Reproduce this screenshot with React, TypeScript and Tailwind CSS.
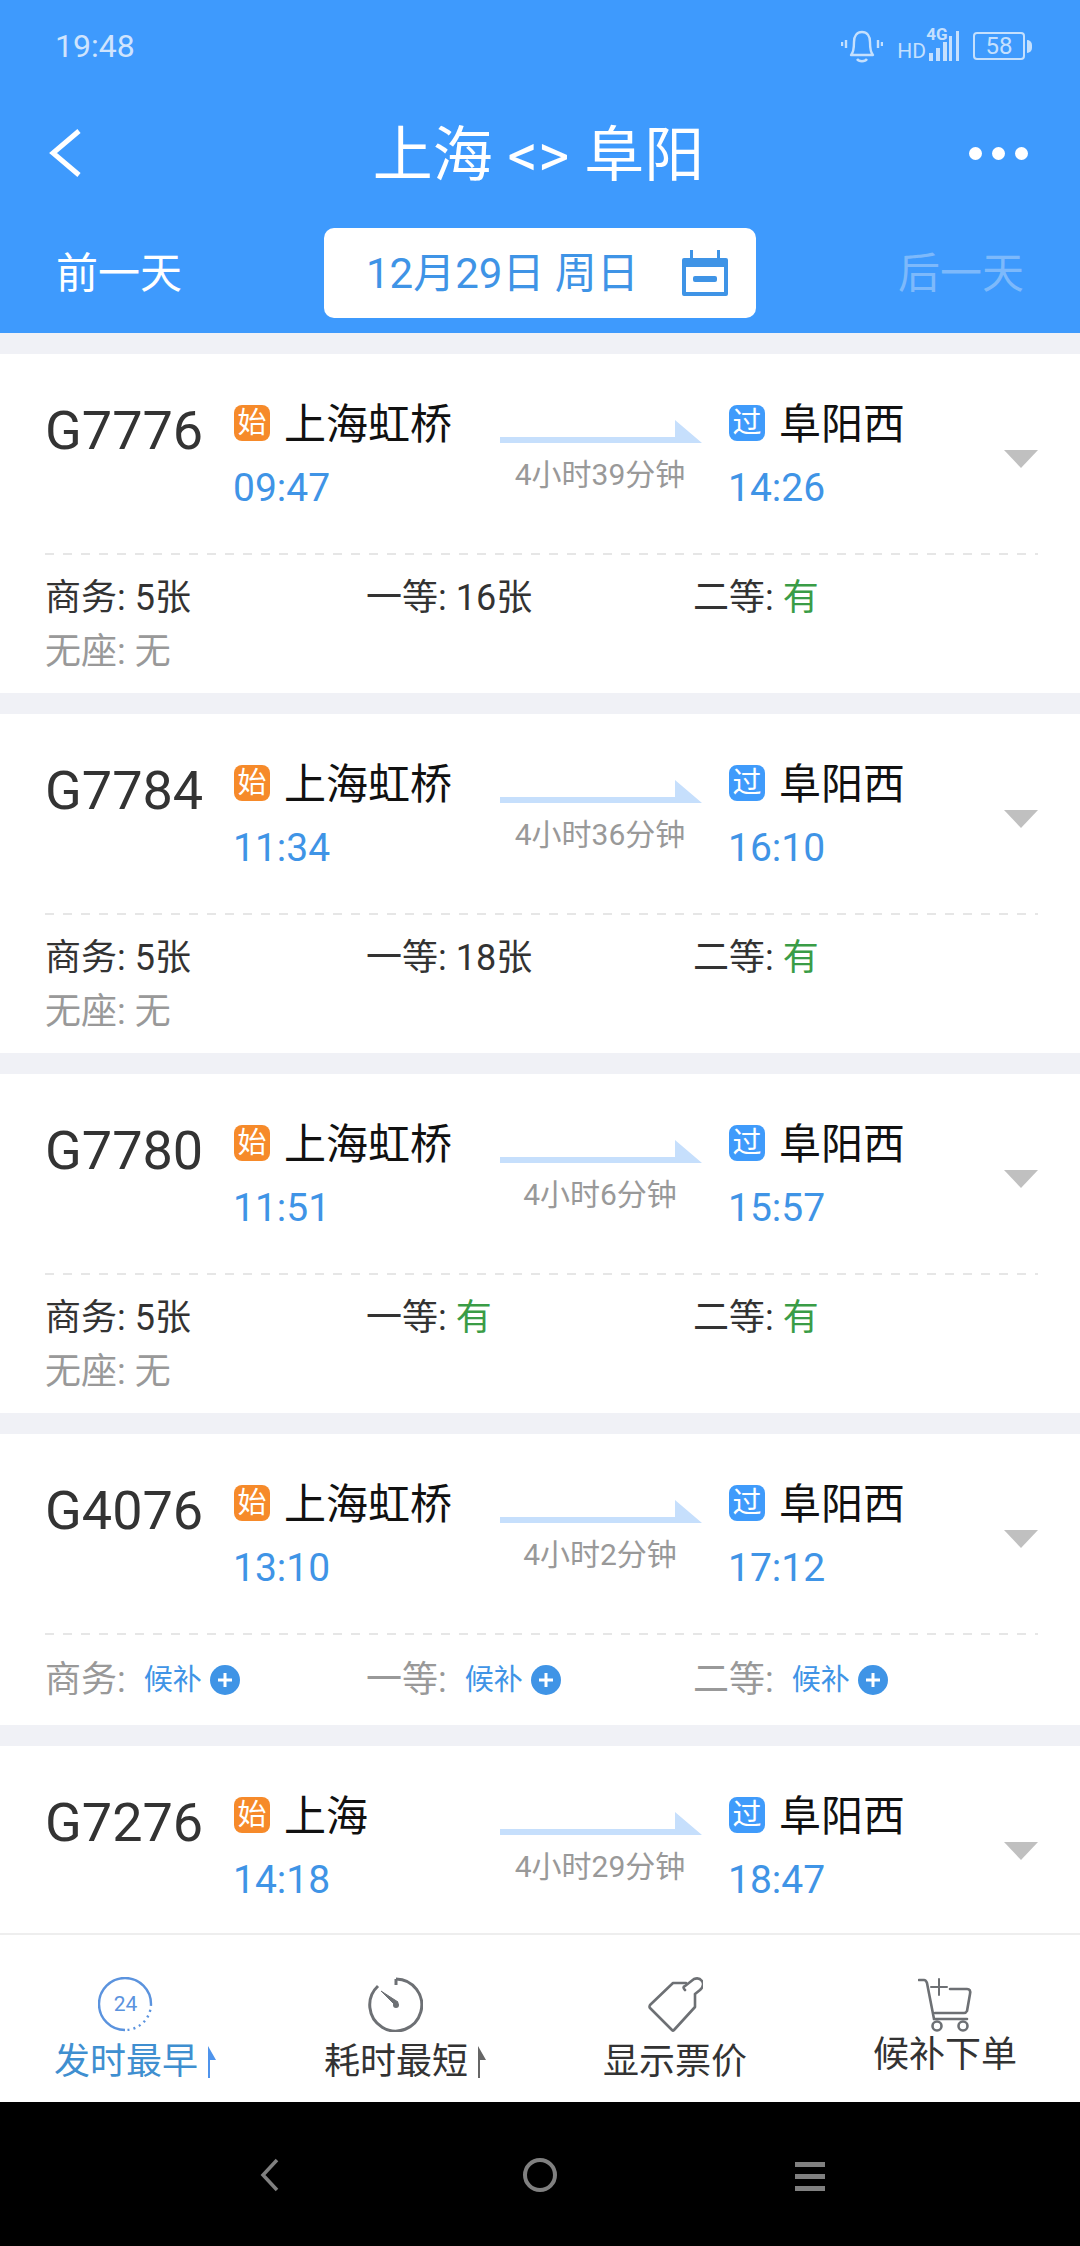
const trains = [
  { no: "G7776", from: "上海虹桥", dep: "09:47", dur: "4小时39分钟", arr: "14:26", seats: [["商务", "5张"], ["一等", "16张"], ["二等", "有"]], extra: true },
  { no: "G7784", from: "上海虹桥", dep: "11:34", dur: "4小时36分钟", arr: "16:10", seats: [["商务", "5张"], ["一等", "18张"], ["二等", "有"]], extra: true },
  { no: "G7780", from: "上海虹桥", dep: "11:51", dur: "4小时6分钟", arr: "15:57", seats: [["商务", "5张"], ["一等", "有"], ["二等", "有"]], extra: true },
  { no: "G4076", from: "上海虹桥", dep: "13:10", dur: "4小时2分钟", arr: "17:12", seats: [["商务", "候补"], ["一等", "候补"], ["二等", "候补"]], extra: false },
  { no: "G7276", from: "上海", dep: "14:18", dur: "4小时29分钟", arr: "18:47", seats: [], extra: false },
];

function Badge({ text, orange }: { text: string; orange?: boolean }) {
  return (
    <span className={`flex h-[36px] w-[36px] shrink-0 items-center justify-center rounded-[8px] text-[29px] leading-none text-white ${orange ? "bg-[#f68a2a]" : "bg-[#3f9bfb]"}`}>
      {text}
    </span>
  );
}

function Seat({ label, value }: { label: string; value: string }) {
  if (value === "候补") {
    return (
      <div className="flex items-center pt-[2px] text-[36px] text-[#999999]">
        <span>{label}:</span>
        <span className="ml-[18px] text-[29px] text-[#3f94e6]">候补</span>
        <svg className="ml-[8px]" width="30" height="30" viewBox="0 0 30 30">
          <circle cx="15" cy="15" r="15" fill="#3f94e6" />
          <path d="M15 8v14M8 15h14" stroke="#fff" strokeWidth="3" />
        </svg>
      </div>
    );
  }
  return (
    <div className="text-[36px] text-[#333333]">
      {label}: <span className={value === "有" ? "text-[#3a9c46]" : ""}>{value}</span>
    </div>
  );
}

function Card({ t }: { t: (typeof trains)[number] }) {
  return (
    <div className="shrink-0 bg-white">
      <div className="flex h-[199px] pl-[45px]">
        <div className="w-[189px] pt-[47px] text-[54px] leading-[60px] text-[#333333]">{t.no}</div>
        <div className="w-[266px] pt-[44px]">
          <div className="flex h-[50px] items-center gap-[14px] text-[42px] leading-[50px] text-[#111111]">
            <Badge text="始" orange />
            <span className="pt-[3px]">{t.from}</span>
          </div>
          <div className="-ml-px mt-[20px] h-[40px] text-[39px] leading-[40px] text-[#3f94e6]">{t.dep}</div>
        </div>
        <div className="flex w-[229px] flex-col pt-[66px]">
          <svg width="202" height="23" viewBox="0 0 202 23">
            <path d="M0 17h175V0l27 23H0z" fill="#c6dffc" />
          </svg>
          <div className="mt-[15px] w-[200px] text-center text-[30px] leading-[34px] text-[#999999]">{t.dur}</div>
        </div>
        <div className="w-[275px] pt-[44px]">
          <div className="flex h-[50px] items-center gap-[14px] text-[42px] leading-[50px] text-[#111111]">
            <Badge text="过" />
            <span className="pt-[3px]">阜阳西</span>
          </div>
          <div className="-ml-px mt-[20px] h-[40px] text-[39px] leading-[40px] text-[#3f94e6]">{t.arr}</div>
        </div>
        <div className="pt-[96px]">
          <svg width="34" height="18" viewBox="0 0 34 18">
            <path d="M0 0h34L17 18z" fill="#c0c0c0" />
          </svg>
        </div>
      </div>
      {t.seats.length > 0 && (
        <div className="pl-[45px] pr-[42px]">
          <div className="h-[2px] bg-[repeating-linear-gradient(90deg,#e6e6e6_0_9px,transparent_9px_18px)]" />
          <div className="grid grid-cols-[321px_327px_1fr] pt-[16px] leading-[54px]">
            {t.seats.map(([l, v]) => (
              <Seat key={l} label={l} value={v} />
            ))}
          </div>
          {t.extra ? (
            <div className="pb-[14px] text-[36px] leading-[54px] text-[#999999]">无座: 无</div>
          ) : (
            <div className="h-[18px]" />
          )}
        </div>
      )}
    </div>
  );
}

function SortArrow({ color }: { color: string }) {
  return (
    <svg width="8" height="32" viewBox="0 0 8 32" fill={color}>
      <path d="M0 0l8 14H2v18H0z" />
    </svg>
  );
}

function Tab({ icon, label, color, arrow, up }: { icon: React.ReactNode; label: string; color: string; arrow?: string; up?: boolean }) {
  return (
    <div className="flex flex-col items-center">
      <div className={`h-[55px] ${arrow ? "pr-[19px]" : ""}`}>{icon}</div>
      <div className={`flex items-center gap-[10px] text-[36px] leading-[48px] ${up ? "-mt-[1px]" : "mt-[6px]"}`} style={{ color }}>
        {label}
        {arrow && <SortArrow color={arrow} />}
      </div>
    </div>
  );
}

export default function App() {
  return (
    <div className="flex h-[2246px] w-[1080px] flex-col overflow-hidden bg-black font-['Roboto','Noto_Sans_CJK_SC',sans-serif]">
      <header className="h-[333px] shrink-0 bg-[#3e9afd]">
        <div className="flex h-[92px] items-center justify-between pl-[55px] pr-[48px]">
          <span className="text-[32px] text-[#cfe4fd]">19:48</span>
          <div className="flex items-center text-[#c5e0fd]">
            <svg width="42" height="36" viewBox="0 0 42 36" fill="none" stroke="#c5e0fd" strokeWidth="2.4">
              <path d="M10 27c3-3 3-8 3-13 0-6 3-10 8-10s8 4 8 10c0 5 0 10 3 13z" strokeLinejoin="round" />
              <path d="M16 31c2 3 8 3 10 0" />
              <path d="M5 12v8M1 14v4M37 12v8M41 14v4" />
            </svg>
            <div className="relative ml-[14px] flex items-end">
              <span className="text-[21px] leading-[20px]">HD</span>
              <span className="absolute -top-[4px] left-[29px] text-[17px] font-bold leading-[14px]">4G</span>
              <svg className="ml-[3px]" width="30" height="30" viewBox="0 0 30 30" fill="#c5e0fd">
                <rect x="0" y="22" width="4" height="8" />
                <rect x="7" y="17" width="4" height="13" />
                <rect x="14" y="11" width="4" height="19" />
                <rect x="20" y="5" width="3" height="25" />
                <rect x="27" y="0" width="3" height="30" />
              </svg>
            </div>
            <div className="ml-[14px] flex h-[28px] w-[52px] items-center justify-center rounded-[4px] border-2 border-[#c5e0fd] text-[24px] leading-none">58</div>
            <div className="ml-[2px] h-[13px] w-[5px] rounded-r-[5px] bg-[#c5e0fd]" />
          </div>
        </div>
        <div className="flex h-[122px] items-center justify-between pl-[48px] pr-[52px]">
          <svg width="34" height="48" viewBox="0 0 34 48" fill="none" stroke="#fff" strokeWidth="5">
            <path d="M31 2L5 24l26 22" />
          </svg>
          <div className="pl-[26px] pt-[5px] text-[60px] leading-none text-white">上海 &lt;&gt; 阜阳</div>
          <div className="flex gap-[10px]">
            <span className="h-[13px] w-[13px] rounded-full bg-white" />
            <span className="h-[13px] w-[13px] rounded-full bg-white" />
            <span className="h-[13px] w-[13px] rounded-full bg-white" />
          </div>
        </div>
        <div className="flex h-[119px] items-start justify-between px-[56px] pt-[14px] text-[42px] text-white">
          <span className="pt-[14px]">前一天</span>
          <div className="flex h-[90px] w-[432px] items-center rounded-[10px] bg-white pl-[42px] pr-[28px] text-[42px] text-[#3f94e6]">
            <span>12月29日 周日</span>
            <svg className="ml-auto" width="46" height="46" viewBox="0 0 46 46" fill="#3f94e6">
              <path fillRule="evenodd" d="M2 8h6V0h3v8h24V0h3v8h6a2 2 0 012 2v34a2 2 0 01-2 2H2a2 2 0 01-2-2V10a2 2 0 012-2zm2 9v25h38V17z" />
              <rect x="11" y="26" width="24" height="6" rx="2" />
            </svg>
          </div>
          <span className="pt-[14px] text-[#7db9fb]">后一天</span>
        </div>
      </header>
      <main className="flex min-h-0 flex-1 flex-col gap-[21px] overflow-hidden border-b-2 border-[#eeeeee] bg-[#f0f1f6] pt-[21px]">
        {trains.map((t) => (
          <Card key={t.no} t={t} />
        ))}
      </main>
      <nav className="grid h-[167px] shrink-0 grid-cols-4 bg-white pt-[42px]">
        <Tab
          color="#3f8fd0"
          arrow="#4f94ec"
          label="发时最早"
          icon={
            <svg width="55" height="55" viewBox="0 0 55 55" fill="none" stroke="#5b93de" strokeWidth="2.4">
              <path d="M53 27A26 26 0 1027 53" />
              <path d="M53 27A26 26 0 0127 53" strokeDasharray="2 4" />
              <text x="27.5" y="34" textAnchor="middle" fontSize="21" fill="#5b93de" stroke="none">24</text>
            </svg>
          }
        />
        <Tab
          color="#333333"
          arrow="#666666"
          label="耗时最短"
          icon={
            <svg width="55" height="55" viewBox="0 0 55 55" fill="none" stroke="#6d7074" strokeWidth="3">
              <path d="M28 2a26 26 0 11-18 7" />
              <path d="M28 2v6" />
              <path d="M13 14l15 15 2-4z" fill="#6d7074" strokeWidth="1" />
              <circle cx="28" cy="28" r="3" fill="#6d7074" stroke="none" />
            </svg>
          }
        />
        <Tab
          color="#333333"
          label="显示票价"
          icon={
            <svg width="55" height="55" viewBox="0 0 55 55" fill="none" stroke="#6d7074" strokeWidth="2.6" strokeLinejoin="round" strokeLinecap="round">
              <path d="M38 6H25L2 28q-1 2 0 3l22 22q1 1 2 0l21-23V18" />
              <path d="M37 13q-3-3 0-4l9-7q5-2 8 2t-2 9l-5 4" />
            </svg>
          }
        />
        <Tab
          color="#333333"
          up
          label="候补下单"
          icon={
            <svg width="55" height="55" viewBox="0 0 55 55" fill="none" stroke="#6d7074" strokeWidth="2.6" strokeLinecap="round">
              <path d="M1 3h5q2 0 3 3l7 36h33" />
              <path d="M32 12h17q4 0 3 5l-3 17q-1 2-3 2H17" />
              <path d="M21 2v16M13 10h16" strokeWidth="2" />
              <circle cx="19" cy="49" r="4.5" />
              <circle cx="45" cy="49" r="4.5" />
            </svg>
          }
        />
      </nav>
      <footer className="relative flex h-[144px] shrink-0 items-start bg-black pl-[260px] pt-[56px]">
        <svg width="20" height="34" viewBox="0 0 20 34" fill="none" stroke="#808080" strokeWidth="3.5">
          <path d="M17 2L3 17l14 15" />
        </svg>
        <div className="ml-[243px] h-[34px] w-[34px] rounded-full border-[4px] border-[#808080]" />
        <div className="ml-[238px] flex w-[30px] flex-col gap-[7px] pt-[4px]">
          <span className="h-[5px] bg-[#808080]" />
          <span className="h-[5px] bg-[#808080]" />
          <span className="h-[5px] bg-[#808080]" />
        </div>
      </footer>
    </div>
  );
}
